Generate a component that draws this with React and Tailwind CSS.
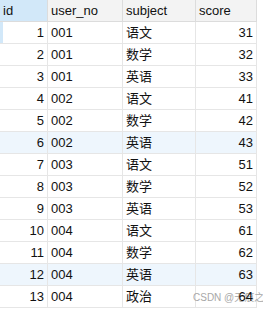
import React from "react";

const rows = [
  [1, "001", "语文", 31],
  [2, "001", "数学", 32],
  [3, "001", "英语", 33],
  [4, "002", "语文", 41],
  [5, "002", "数学", 42],
  [6, "002", "英语", 43],
  [7, "003", "语文", 51],
  [8, "003", "数学", 52],
  [9, "003", "英语", 53],
  [10, "004", "语文", 61],
  [11, "004", "数学", 62],
  [12, "004", "英语", 63],
  [13, "004", "政治", 64],
];

export default function App() {
  return (
    <div
      className="relative w-[263px] h-[312px] overflow-hidden bg-white text-[13px] text-[#111]"
      style={{ fontFamily: '"Liberation Sans", "Noto Sans CJK SC", sans-serif' }}
    >
      <div className="flex h-[22px] border-b border-[#dcdcdc] bg-[#f3f3f3] w-[257px]">
        <div className="w-[48px] shrink-0 border-r border-[#dcdcdc] bg-[#d2e8f9] pl-[3px] leading-[21px]">id</div>
        <div className="w-[75px] shrink-0 border-r border-[#dcdcdc] pl-[3px] leading-[21px]">user_no</div>
        <div className="w-[73px] shrink-0 border-r border-[#dcdcdc] pl-[3px] leading-[21px]">subject</div>
        <div className="w-[61px] shrink-0 border-r border-[#dcdcdc] pl-[3px] leading-[21px]">score</div>
      </div>
      {rows.map(([id, u, s, sc]) => (
        <div
          key={id}
          className={`flex h-[22px] border-b border-[#e6e6e6] w-[257px] ${
            id === 6 || id === 12 ? "bg-[#eef6fd]" : "bg-white"
          }`}
        >
          <div
            className={`w-[48px] shrink-0 border-r border-[#e6e6e6] text-right pr-[3px] leading-[21px] ${
              id === 1 ? "border-l-[3px] border-l-[#d2e8f9]" : ""
            }`}
          >
            {id}
          </div>
          <div className="w-[75px] shrink-0 border-r border-[#e6e6e6] pl-[3px] leading-[21px]">{u}</div>
          <div className="w-[73px] shrink-0 border-r border-[#e6e6e6] pl-[3px] leading-[21px]">{s}</div>
          <div className="w-[61px] shrink-0 border-r border-[#e6e6e6] text-right pr-[3px] leading-[21px]">
            <span className="relative z-10">{sc}</span>
          </div>
        </div>
      ))}
      <div className="absolute left-[193px] top-[291px] text-[10px] text-[#a8a8a8] leading-[14px] whitespace-nowrap">
        CSDN @无痕之
      </div>
    </div>
  );
}
